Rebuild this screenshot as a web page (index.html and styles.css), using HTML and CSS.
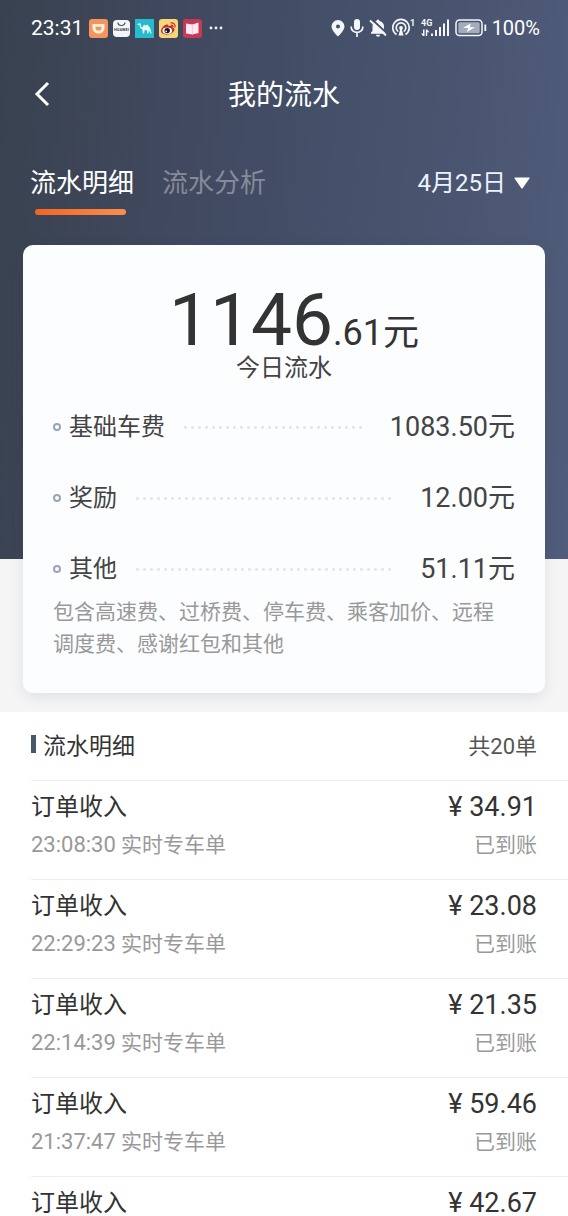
FILE: index.html
```html
<!DOCTYPE html>
<html lang="zh-CN">
<head>
<meta charset="utf-8">
<meta name="viewport" content="width=device-width, initial-scale=1">
<title>我的流水</title>
<link rel="stylesheet" href="styles.css">
</head>
<body>
<div class="app">
  <section class="hero">
    <div class="status">
      <div class="status-left">
        <span class="clock">23:31</span>
        <svg width="19" height="19" viewBox="0 0 19 19" aria-hidden="true"><rect width="19" height="19" rx="3" fill="#f3955f"/><path d="M3.500 5h12v4a6 5.500 0 0 1-12 0z" fill="#fff0dc"/><path d="M6.500 7.800h6V9a3 2.600 0 0 1-6 0z" fill="#f3955f"/></svg>
        <svg width="17" height="19" viewBox="0 0 17 19" aria-hidden="true"><rect y="1" width="17" height="17" rx="4" fill="#f4f5f7"/><path d="M5 3.500a3.500 3 0 0 0 7 0" fill="none" stroke="#454a55" stroke-width="1.200"/><text x="8.500" y="12" class="tiny-logo">HUAWEI</text></svg>
        <svg width="19" height="19" viewBox="0 0 19 19" aria-hidden="true"><rect width="19" height="19" fill="#27bccb"/><path d="M2.500 5l2.200-.8 1.200.8v2.500l1.400.9 1.800-3 1.500 1.400 1.700-1.200 2.800 3.400 1.500 5.500h-1L13.800 11l-.4 3.500h-1.100l-.3-3.200-2.400-.4-.5 3.600H8l-.6-4-2.200-1.800-.5-2.500-2-.2z" fill="#e9ffff"/></svg>
        <svg width="19" height="19" viewBox="0 0 19 19" aria-hidden="true"><rect width="19" height="19" rx="3" fill="#f8d778"/><path d="M2 12c0-3 4-7 6.500-6.500 1 .2.800 1.500.8 1.500 3-1.200 4.700-.5 4.200 1.500 2 .6 2.500 2 1.500 3.500-2.600 4.800-13 4.500-13 0z" fill="#c92a2d"/><ellipse cx="8.300" cy="11.700" rx="4.800" ry="3.200" fill="#fff"/><circle cx="8.200" cy="11.600" r="2.700" fill="#17171a"/><circle cx="7.200" cy="12.400" r=".8" fill="#fff"/><path d="M11.500 4c3-.7 5.300 1.500 4.400 4.500M12 6.200c1.500-.2 2.300.7 2 2" fill="none" stroke="#c92a2d" stroke-width="1.200"/></svg>
        <svg width="19" height="19" viewBox="0 0 19 19" aria-hidden="true"><rect width="19" height="19" rx="3" fill="#c73857"/><path d="M3 4.500l6.500 1 6-2v10.500l-6 1.500-6.500-1z" fill="#ffeaf0"/><path d="M9.500 5.500v10" stroke="#f3bdca" stroke-width=".7"/></svg>
        <svg width="16" height="19" viewBox="0 0 16 19" aria-hidden="true"><g fill="#f1f3f7"><circle cx="4" cy="9" r="1.400"/><circle cx="9" cy="9" r="1.400"/><circle cx="14" cy="9" r="1.400"/></g></svg>
      </div>
      <div class="status-right">
        <svg width="14" height="20" viewBox="0 0 14 20" aria-hidden="true"><path fill-rule="evenodd" d="M7 2a6.500 6.500 0 0 0-6.500 6.500C.5 12.500 7 18.500 7 18.500s6.500-6 6.500-10A6.500 6.500 0 0 0 7 2zm0 4.500a2 2 0 1 1 0 4 2 2 0 0 1 0-4z" fill="#f4f6fa"/></svg>
        <svg width="14" height="20" viewBox="0 0 14 20" aria-hidden="true"><rect x="4" y="1" width="6" height="11" rx="3" fill="#f4f6fa"/><path d="M1.200 8.500v.8a5.800 5 0 0 0 11.600 0v-.8M7 14.300V19" fill="none" stroke="#f4f6fa" stroke-width="1.700"/></svg>
        <svg width="18" height="20" viewBox="0 0 18 20" aria-hidden="true"><path d="M7.500 3a1.500 1.500 0 0 1 3 0c2.900.7 4.500 2.700 4.500 5.200v4.500l1.500 1.800v1.300H2v-1.300l1.500-1.600V8.200C3.500 5.700 4.700 3.700 7.500 3zM7 16.800h4a2 2 0 0 1-4 0z" fill="#f4f6fa"/><path d="M2.500 1l16 14.800" stroke="#47526c" stroke-width="1.800"/><path d="M1 2.500l16 15" stroke="#f4f6fa" stroke-width="1.800"/></svg>
        <svg width="23" height="20" viewBox="0 0 23 20" aria-hidden="true"><g fill="none" stroke="#f4f6fa" stroke-width="1.700"><path d="M4.500 16.500a8.200 8.200 0 1 1 9 0"/><path d="M6.200 13.600a4.800 4.800 0 1 1 5.600 0"/></g><circle cx="9" cy="10" r="1.900" fill="#f4f6fa"/><path d="M8.300 11h1.400l1.800 6.500h-5z" fill="#f4f6fa"/><text x="18" y="8" class="tiny-text">1</text></svg>
        <svg width="30" height="20" viewBox="0 0 30 20" aria-hidden="true"><text x="1" y="8" class="tiny-text">4G</text><g fill="#f4f6fa"><path d="M3 11.500h1.500V18H3l-2-2.500h2zM5.800 18v-6.500h1.400l2.200 2.800H7.200V18zM11 15.500h2V18h-2zM15 12h2v6h-2zM19 9h2v9h-2zM23 5.500h2V18h-2zM27 1.500h2V18h-2z"/></g></svg>
        <svg width="32" height="20" viewBox="0 0 32 20" aria-hidden="true"><rect x="1" y="2" width="26" height="15.500" rx="3.500" fill="none" stroke="#f4f6fa" stroke-width="1.500"/><rect x="3.300" y="4.200" width="21.400" height="11.100" rx="1.500" fill="#a4adbd"/><path d="M15.500 5.500L8 10h5.200l-1.300 4 8.100-4.800h-5z" fill="#fff"/><path d="M30.300 6.500v6.500" stroke="#f4f6fa" stroke-width="1.800"/></svg>
        <span class="battery-level">100%</span>
      </div>
    </div>

    <header class="titlebar">
      <button class="back" type="button" aria-label="返回"><svg width="18" height="26" viewBox="0 0 18 26"><path d="M16 2L5 13l11 11" fill="none" stroke="#fff" stroke-width="3"/></svg></button>
      <h1 class="title">我的流水</h1>
    </header>

    <nav class="tabs">
      <button class="tab tab-active" type="button">流水明细</button>
      <button class="tab" type="button">流水分析</button>
      <button class="date" type="button">4月25日<svg width="16" height="12" viewBox="0 0 16 12" aria-hidden="true"><path d="M1 .5h14q1 0 .4.900L8.800 11q-.8 1-1.600 0L.6 1.400Q0 .5 1 .5z" fill="#fff"/></svg></button>
    </nav>

    <div class="card">
      <div class="total">1146<span class="total-small">.61元</span></div>
      <div class="total-label">今日流水</div>
      <ul class="items">
        <li class="item"><span class="dot"></span><span>基础车费</span><span class="leader"></span><span class="amount">1083.50元</span></li>
        <li class="item"><span class="dot"></span><span>奖励</span><span class="leader"></span><span class="amount">12.00元</span></li>
        <li class="item"><span class="dot"></span><span>其他</span><span class="leader"></span><span class="amount">51.11元</span></li>
      </ul>
      <p class="note">包含高速费、过桥费、停车费、乘客加价、远程调度费、感谢红包和其他</p>
    </div>
  </section>

  <section class="detail">
    <div class="detail-head"><h2 class="detail-title">流水明细</h2><span class="count">共20单</span></div>
    <ul class="orders">
      <li class="order"><span class="name">订单收入</span><span class="money">¥ 34.91</span><span class="meta"><span class="time">23:08:30</span> 实时专车单</span><span class="meta state">已到账</span></li>
      <li class="order"><span class="name">订单收入</span><span class="money">¥ 23.08</span><span class="meta"><span class="time">22:29:23</span> 实时专车单</span><span class="meta state">已到账</span></li>
      <li class="order"><span class="name">订单收入</span><span class="money">¥ 21.35</span><span class="meta"><span class="time">22:14:39</span> 实时专车单</span><span class="meta state">已到账</span></li>
      <li class="order"><span class="name">订单收入</span><span class="money">¥ 59.46</span><span class="meta"><span class="time">21:37:47</span> 实时专车单</span><span class="meta state">已到账</span></li>
      <li class="order"><span class="name">订单收入</span><span class="money">¥ 42.67</span></li>
    </ul>
  </section>
</div>
</body>
</html>
```
FILE: styles.css
```css
* { box-sizing: border-box; }

body, h1, h2, p, ul { margin: 0; padding: 0; }

ul { list-style: none; }

body {
  font-family: Roboto, "Noto Sans CJK SC", sans-serif;
  color: #333;
  background: #fff;
}

button {
  padding: 0;
  border: 0;
  background: none;
  color: inherit;
  font: inherit;
  cursor: pointer;
}

svg { display: block; flex: none; }

.app {
  display: flex;
  flex-direction: column;
  height: 100vh;
}

/* The dark band ends behind the lower part of the card. */
.hero {
  flex: none;
  padding-bottom: 19px;
  color: #fff;
  background: linear-gradient(95deg, #39424f 0%, #3f475c 25%, #434e67 50%, #4a5671 78%, #4f5c7b 100%) top / 100% 559px no-repeat #f5f5f6;
}

.status {
  display: flex;
  justify-content: space-between;
  height: 56px;
  padding: 0 28px 0 31px;
}

.status-left, .status-right {
  display: flex;
  align-items: center;
  gap: 5px;
}

.clock {
  margin-right: 1px;
  font-size: 21px;
}

.battery-level { font-size: 20px; }

.tiny-text {
  font: bold 9px Roboto, sans-serif;
  fill: #f4f6fa;
}

.tiny-logo {
  font: bold 4px Roboto, sans-serif;
  fill: #454a55;
  text-anchor: middle;
}

.titlebar {
  display: grid;
  grid-template-columns: 48px 1fr 48px;
  align-items: center;
  height: 76px;
  padding: 0 32px;
}

.title {
  padding-top: 4px;
  font-size: 28px;
  font-weight: 400;
  line-height: 40px;
  text-align: center;
}

.tabs {
  display: flex;
  align-items: flex-start;
  gap: 28px;
  height: 113px;
  padding: 31px 38px 0 30px;
  line-height: 40px;
}

.tab {
  color: #858b99;
  font-size: 26px;
}

.tab-active { color: #fff; }

.tab-active::after {
  content: "";
  display: block;
  height: 6px;
  margin: 6px 8px 0 5px;
  border-radius: 3px;
  background: linear-gradient(90deg, #f26522, #f98e50);
}

.date {
  display: flex;
  align-items: center;
  gap: 8px;
  margin-left: auto;
  color: #eef2ff;
  font-size: 24px;
}

.card {
  margin: 0 23px;
  padding: 44px 30px 33px;
  border-radius: 10px;
  background: #fcfdff;
  box-shadow: 0 4px 14px rgba(40, 50, 80, 0.1);
  color: #444;
}

.total {
  height: 62px;
  padding-left: 20px;
  color: #333;
  font-size: 73px;
  line-height: 62px;
  text-align: center;
}

.total-small { font-size: 36px; line-height: 1; }

.total-label {
  margin-top: 2px;
  font-size: 24px;
  line-height: 30px;
  text-align: center;
}

.items {
  display: grid;
  gap: 41px;
  margin-top: 29px;
}

.item {
  display: flex;
  align-items: center;
  font-size: 24px;
  line-height: 30px;
}

.dot {
  width: 8px;
  height: 8px;
  margin-right: 8px;
  border: 2px solid #98a5b3;
  border-radius: 50%;
}

.leader {
  flex: 1;
  height: 3px;
  margin: 0 26px 0 17px;
  background: radial-gradient(circle, #e2e5ea 1px, transparent 2px) 0 0 / 7px 3px;
}

.amount { font-size: 27px; }

.note {
  margin-top: 12px;
  padding-right: 12px;
  color: #999;
  font-size: 21px;
  line-height: 32px;
}

.detail {
  flex: 1;
  min-height: 0;
  overflow-y: auto;
  scrollbar-width: none;
}

.detail-head {
  display: flex;
  align-items: center;
  justify-content: space-between;
  height: 68px;
  padding: 0 31px 4px;
}

.detail-title {
  display: flex;
  align-items: center;
  gap: 7px;
  font-size: 23px;
  font-weight: 400;
}

.detail-title::before {
  content: "";
  width: 5px;
  height: 18px;
  background: #46586a;
}

.count {
  color: #555;
  font-size: 22px;
}

.orders { padding-left: 31px; }

.order {
  display: grid;
  grid-template-columns: 1fr auto;
  row-gap: 6px;
  padding: 9px 31px 19px 0;
  border-top: 1px solid #eee;
  line-height: 30px;
}

.name, .money { line-height: 34px; }
.name { font-size: 24px; }
.money { font-size: 27px; }

.meta {
  color: #999;
  font-size: 21px;
}

.time { font-size: 22px; }

.state { text-align: right; }
```
